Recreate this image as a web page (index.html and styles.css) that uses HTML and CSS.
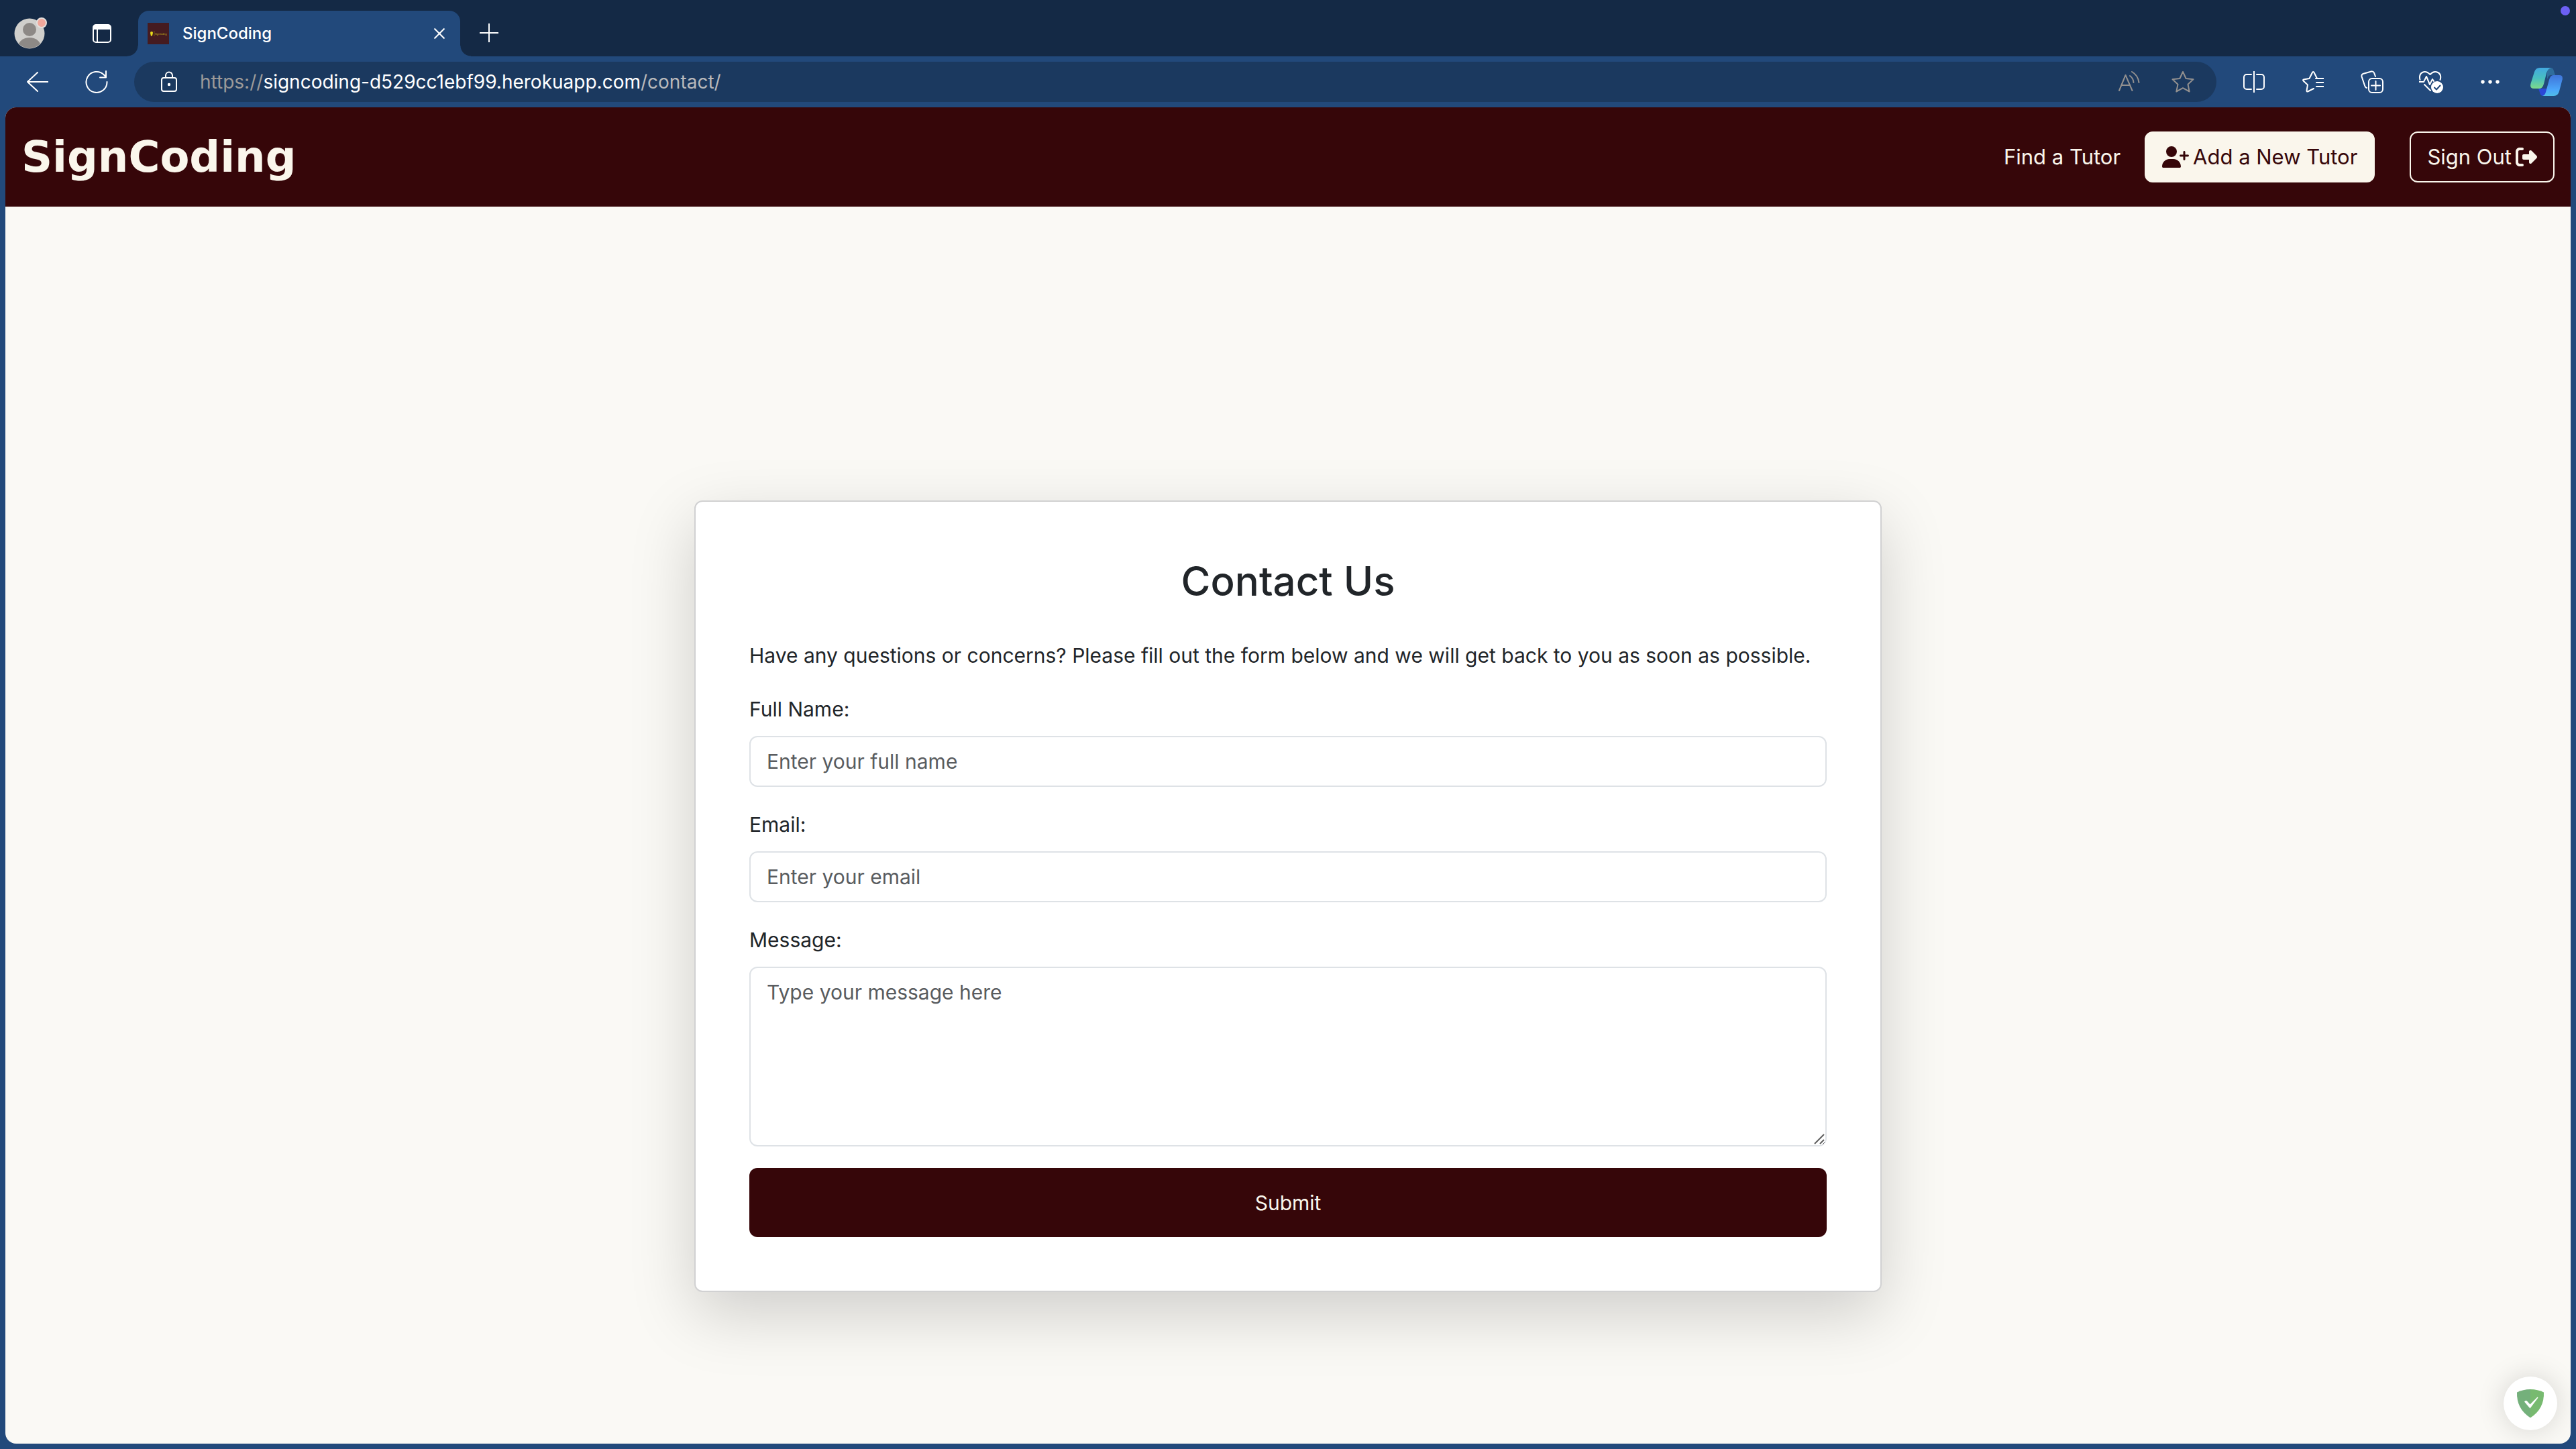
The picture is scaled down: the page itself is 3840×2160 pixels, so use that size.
FILE: index.html
```html
<!DOCTYPE html>
<html lang="en">
<head>
<meta charset="utf-8">
<title>SignCoding</title>
<link rel="stylesheet" href="styles.css">
</head>
<body>
<div class="browser">
  <div class="tab-strip">
    <button class="profile" aria-label="Profile">
      <svg width="52" height="52" viewBox="0 0 52 52">
        <defs><clipPath id="face"><circle cx="24" cy="28" r="22"/></clipPath></defs>
        <circle cx="24" cy="28" r="22.500" fill="#d0cfcc"/>
        <g clip-path="url(#face)" fill="#8d8986"><circle cx="24" cy="22" r="10"/><ellipse cx="24" cy="48" rx="17" ry="14"/></g>
        <circle cx="42" cy="12" r="7" fill="#f0a79b" stroke="#e3dfdc" stroke-width="2"/>
      </svg>
    </button>
    <button class="workspaces" aria-label="Tab actions">
      <svg width="28" height="28" viewBox="0 0 28 28">
        <rect x="1" y="1" width="26" height="26" rx="4" fill="none" stroke="#fff" stroke-width="2"/>
        <path d="M1 8V4a3 3 0 0 1 3-3h20a3 3 0 0 1 3 3v4z" fill="#fff"/><path d="M7 8v19" stroke="#fff" stroke-width="2"/>
      </svg>
    </button>
    <div class="tab">
      <svg class="favicon" width="32" height="32" viewBox="0 0 32 32">
        <rect width="32" height="32" fill="#451b20"/>
        <path d="M4 15q0-2 2-2t2 2l-1 4-2 1z" fill="#e8dc1a"/><path d="M10 12v8" stroke="#8b7a1c" stroke-width=".6"/>
        <text x="11" y="18" font-family="Inter" font-size="3.200" fill="#c9b91c">SignCoding</text>
      </svg>
      <span class="tab-title">SignCoding</span>
      <button class="tab-close" aria-label="Close tab">
        <svg width="18" height="18" viewBox="0 0 18 18"><path d="M1.500 1.500l15 15m0-15l-15 15" stroke="#fff" stroke-width="2"/></svg>
      </button>
    </div>
    <button class="new-tab" aria-label="New tab">
      <svg width="28" height="28" viewBox="0 0 28 28"><path d="M14 0v28M0 14h28" stroke="#fff" stroke-width="2"/></svg>
    </button>
    <span class="status-dot"></span>
  </div>

  <div class="toolbar">
    <button class="tool" aria-label="Back">
      <svg class="line" width="32" height="32" viewBox="0 0 32 32"><path d="M31.500 16H1M16 2L1 16l15 14"/></svg>
    </button>
    <button class="tool" aria-label="Reload">
      <svg class="line" width="34" height="34" viewBox="0 0 34 34"><path d="M32.500 17A15.500 15.500 0 1 1 28 6.500L31 10M31 1v9.500h-9"/></svg>
    </button>
    <div class="address">
      <svg class="line" width="32" height="32" viewBox="0 0 32 32"><rect x="5" y="10" width="22" height="20" rx="3"/><path d="M11 10V6.500a5 5 0 0 1 10 0V10"/><circle cx="16" cy="20" r="1.200" fill="#fff"/></svg>
      <div class="url"><span class="dim">https://</span>signcoding-d529cc1ebf99.herokuapp.com<span class="path">/contact/</span></div>
      <button class="tool-small" aria-label="Read aloud">
        <svg class="line muted" width="32" height="32" viewBox="0 0 32 32"><path d="M1 29L10.500 6l10 23M4.500 21h13M17 7q5 3.500 5.500 10M20 1q9 5 10.500 16"/></svg>
      </button>
      <button class="tool-small" aria-label="Add to favourites">
        <svg class="line muted" width="34" height="34" viewBox="0 0 34 34"><path d="M17 2l4.600 10 10.900 1.300-8 7.400 2.200 10.800L17 26.200 7.300 31.500l2.200-10.800-8-7.400L12.400 12z"/></svg>
      </button>
    </div>
    <div class="tools">
      <button class="tool" aria-label="Split screen">
        <svg class="line" width="32" height="32" viewBox="0 0 32 32"><path d="M12 5H5a4 4 0 0 0-4 4v14a4 4 0 0 0 4 4h7M20 5h7a4 4 0 0 1 4 4v14a4 4 0 0 1-4 4h-7M16 0v32"/></svg>
      </button>
      <button class="tool" aria-label="Favourites">
        <svg class="line" width="32" height="32" viewBox="0 0 32 32"><path d="M22 11L17.500 2q-1-2-2.500 0l-4.500 9-8.500 1.500q-1.500.5-.5 2L8 20.500 6.500 29q0 2 1.500 1.500L17 26M20 11h12M21 17h11M21 23h11"/></svg>
      </button>
      <button class="tool" aria-label="Collections">
        <svg class="line" width="34" height="34" viewBox="0 0 34 34"><rect x="12" y="12" width="21" height="21" rx="5"/><path d="M22.500 16v13M16 22.500h13M9 26q-2-.5-2.800-3L1.500 9q-.5-3 2-4L16 1.500q3-.5 4 2L22 9"/></svg>
      </button>
      <button class="tool" aria-label="Browser essentials">
        <svg class="line" width="36" height="34" viewBox="0 0 36 34"><path d="M1.500 14Q-.5 6 5 3t11.500 3Q22 0 28 3t3.500 11M0 17h7l4-8 5 12 4-8 2 3M8 21l9 9"/><circle cx="27" cy="25" r="9" fill="#fff" stroke="none"/><path d="M23 25.500l3 3 5.500-6" stroke="#22497b"/></svg>
      </button>
      <button class="tool" aria-label="Settings and more">
        <svg width="28" height="8" viewBox="0 0 28 8" fill="#fff"><circle cx="3" cy="4" r="2.700"/><circle cx="14" cy="4" r="2.700"/><circle cx="25" cy="4" r="2.700"/></svg>
      </button>
      <button class="tool copilot" aria-label="Copilot">
        <svg width="48" height="42" viewBox="0 0 48 42">
          <defs>
            <linearGradient id="cg" x1="0" y1="0" x2="0" y2="1"><stop offset="0" stop-color="#43a8e0"/><stop offset=".5" stop-color="#48bfc0"/><stop offset="1" stop-color="#7ed98a"/></linearGradient>
            <linearGradient id="cb" x1="0" y1="0" x2="0" y2="1"><stop offset="0" stop-color="#3f74d9"/><stop offset=".7" stop-color="#4ba6fa"/><stop offset="1" stop-color="#50bde8"/></linearGradient>
          </defs>
          <path d="M25 0h5q4 0 5 5l2 6h-7q-3 0-5 6z" fill="#2f6d9c"/>
          <path d="M12 31h14l-3 11h-4q-4 0-5-5z" fill="#2b47d6"/>
          <path d="M14 0h17q-5 1-7 8l-4 16q-2 7-6 7H5q-7 0-4-9L6 6q2-6 8-6z" fill="url(#cg)"/>
          <path d="M34 11h9q7 0 4 9l-4 15q-2 7-8 7H18q4-1 5-6l5-18q2-7 6-7z" fill="url(#cb)"/>
        </svg>
      </button>
    </div>
  </div>

  <div class="page">
    <header class="site-header">
      <a class="brand" href="#">SignCoding</a>
      <nav class="nav">
        <a class="nav-link" href="#">Find a Tutor</a>
        <a class="btn btn-light" href="#">
          <svg width="40" height="32" viewBox="0 0 640 512" fill="currentColor"><path d="M96 128a128 128 0 1 1 256 0A128 128 0 1 1 96 128zM0 482.300C0 383.800 79.800 304 178.300 304h91.400C368.200 304 448 383.800 448 482.300c0 16.400-13.300 29.700-29.700 29.700H29.700C13.300 512 0 498.700 0 482.300zM504 312V248H440c-13.300 0-24-10.700-24-24s10.700-24 24-24h64V136c0-13.300 10.700-24 24-24s24 10.700 24 24v64h64c13.300 0 24 10.700 24 24s-10.700 24-24 24H552v64c0 13.300-10.700 24-24 24s-24-10.700-24-24z"/></svg>
          Add a New Tutor</a>
        <a class="btn btn-outline" href="#">Sign Out
          <svg width="32" height="32" viewBox="0 0 512 512" fill="currentColor"><path d="M377.900 105.900L500.700 228.700c7.200 7.200 11.300 17.100 11.300 27.300s-4.100 20.100-11.300 27.300L377.900 406.100c-6.400 6.400-15 9.900-24 9.900c-18.700 0-33.900-15.200-33.900-33.900l0-62.100-128 0c-17.700 0-32-14.300-32-32l0-64c0-17.700 14.300-32 32-32l128 0 0-62.100c0-18.700 15.200-33.900 33.900-33.900c9 0 17.600 3.600 24 9.900zM160 96L96 96c-17.700 0-32 14.300-32 32l0 256c0 17.700 14.300 32 32 32l64 0c17.700 0 32 14.300 32 32s-14.300 32-32 32l-64 0c-53 0-96-43-96-96L0 128C0 75 43 32 96 32l64 0c17.700 0 32 14.300 32 32s-14.300 32-32 32z"/></svg></a>
      </nav>
    </header>

    <main class="content">
      <form class="card">
        <h1 class="title">Contact Us</h1>
        <p class="intro">Have any questions or concerns? Please fill out the form below and we will get back to you as soon as possible.</p>
        <div class="field">
          <label for="name">Full Name:</label>
          <input id="name" type="text" placeholder="Enter your full name">
        </div>
        <div class="field">
          <label for="email">Email:</label>
          <input id="email" type="email" placeholder="Enter your email">
        </div>
        <div class="field">
          <label for="message">Message:</label>
          <div class="message-box">
            <textarea id="message" rows="5" placeholder="Type your message here"></textarea>
            <svg class="grip" width="18" height="18" viewBox="0 0 18 18"><path d="M0 0h18v12l-6 6H0z" fill="#fff"/><path d="M2 16L16 2M10 16l6-6" stroke="#5f5f5f" stroke-width="2"/></svg>
          </div>
        </div>
        <button class="submit" type="submit">Submit</button>
      </form>
    </main>

    <button class="shield" type="button" aria-label="Protection">
      <svg width="42" height="44" viewBox="0 0 42 44"><path d="M21 1Q10 1 1 5.500 0 30 21 43.500z" fill="#74b07b"/><path d="M21 1q11 0 20 4.500Q42 30 21 43.500z" fill="#78ba70"/><path d="M12 19.500q2-3 4-1l4.500 5L31.500 12.500l1 1L20.500 29.500z" fill="#fff"/></svg>
    </button>
  </div>
</div>
</body>
</html>
```
FILE: styles.css
```css
* { box-sizing: border-box; }

body {
  margin: 0;
  font-family: Inter, "Liberation Sans", sans-serif;
  font-size: 30px;
  line-height: 48px;
  color: #212529;
}

button {
  margin: 0;
  padding: 0;
  border: 0;
  background: none;
  font: inherit;
  color: inherit;
}

svg { display: block; flex: none; }

.browser {
  min-height: 100vh;
  display: flex;
  flex-direction: column;
  background: #22497b;
}

/* Tab strip */
.tab-strip {
  position: relative;
  display: flex;
  height: 84px;
  padding: 16px 8px 0 20px;
  background: #142945;
  color: #fff;
}
.profile { width: 52px; padding-top: 6px; display: flex; align-items: flex-start; }
.workspaces { width: 134px; padding-left: 26px; display: flex; justify-content: center; align-items: center; }
.tab {
  position: relative;
  width: 480px;
  display: flex;
  align-items: center;
  gap: 20px;
  padding: 0 22px 0 14px;
  border-radius: 16px 16px 0 0;
  background: #22497b;
}
.tab::before,
.tab::after {
  content: "";
  position: absolute;
  bottom: 0;
  width: 16px;
  height: 16px;
}
.tab::before { right: 100%; background: radial-gradient(circle at 0 0, transparent 15px, #22497b 16px); }
.tab::after { left: 100%; background: radial-gradient(circle at 100% 0, transparent 15px, #22497b 16px); }
.tab-title { flex: 1; font-size: 24px; font-weight: 500; }
.new-tab { width: 86px; padding-bottom: 2px; display: flex; justify-content: center; align-items: center; }
.status-dot {
  position: absolute;
  top: 9px;
  right: 9px;
  width: 14px;
  height: 14px;
  border-radius: 50%;
  background: #6c60f5;
}

/* Toolbar */
.toolbar {
  display: flex;
  align-items: center;
  height: 76px;
  padding: 0 4px 0 12px;
}
.tool { width: 88px; display: flex; justify-content: center; }
.copilot { width: 80px; }
.tools { display: flex; align-items: center; margin-left: 12px; }
.line { fill: none; stroke: #fff; stroke-width: 2; stroke-linecap: round; stroke-linejoin: round; }
.muted { stroke: #92908f; }
.address {
  flex: 1;
  display: flex;
  align-items: center;
  height: 60px;
  margin-left: 12px;
  padding: 0 10px 0 36px;
  border-radius: 30px;
  background: #1b395f;
}
.url { flex: 1; margin-left: 30px; font-size: 28px; color: #fff; }
.dim { color: #9c9a99; }
.path { color: #b9b9bb; }
.tool-small { width: 80px; display: flex; justify-content: center; }

/* Web page */
.page {
  position: relative;
  flex: 1;
  margin: 0 8px 8px;
  border-radius: 16px;
  overflow: hidden;
  background: #faf9f5;
}
.site-header {
  display: flex;
  align-items: center;
  justify-content: space-between;
  height: 148px;
  padding: 0 24px;
  background: #360609;
}
.brand {
  font-family: "DejaVu Sans", Inter, sans-serif;
  font-size: 64px;
  font-weight: 700;
  line-height: 80px;
  color: #faf6ec;
  text-decoration: none;
}
.nav { display: flex; align-items: center; font-size: 31px; }
.nav-link { margin-right: 36px; color: #faf6ec; text-decoration: none; }
.btn {
  display: flex;
  align-items: center;
  gap: 6px;
  height: 76px;
  padding: 0 24px;
  border: 2px solid #faf6ec;
  border-radius: 12px;
  text-decoration: none;
}
.btn-light { background: #faf6ec; color: #360609; }
.btn-outline { margin-left: 52px; color: #faf6ec; }

.content { display: flex; justify-content: center; padding: 438px 32px 120px; }
.card {
  width: 1770px;
  max-width: 100%;
  padding: 80px;
  border: 2px solid #d1d1d2;
  border-radius: 12px;
  background: #fff;
  box-shadow: 0 32px 96px rgba(0, 0, 0, .175);
}
.title { margin: 0 0 48px; font-size: 60px; font-weight: 500; line-height: 77px; text-align: center; }
.intro { margin: 0 0 32px; }
.field { display: flex; flex-direction: column; gap: 16px; margin-bottom: 32px; }
.field input,
.field textarea {
  display: block;
  width: 100%;
  margin: 0;
  padding: 12px 24px;
  border: 2px solid #dee2e6;
  border-radius: 12px;
  background: #fff;
  font: inherit;
  color: #212529;
}
.field input { height: 76px; }
.field textarea { height: 268px; resize: vertical; }
.field ::placeholder { color: #595c5f; opacity: 1; }
.message-box { position: relative; }
.grip { position: absolute; right: 2px; bottom: 2px; pointer-events: none; }
.submit {
  display: block;
  width: 100%;
  height: 103px;
  border-radius: 12px;
  background: #360609;
  color: #faf6ec;
}

.shield {
  position: absolute;
  right: 20px;
  bottom: 20px;
  width: 80px;
  height: 80px;
  display: flex;
  align-items: center;
  justify-content: center;
  border-radius: 50%;
  background: #fff;
  box-shadow: 0 0 40px rgba(0, 0, 0, .15);
}
```
